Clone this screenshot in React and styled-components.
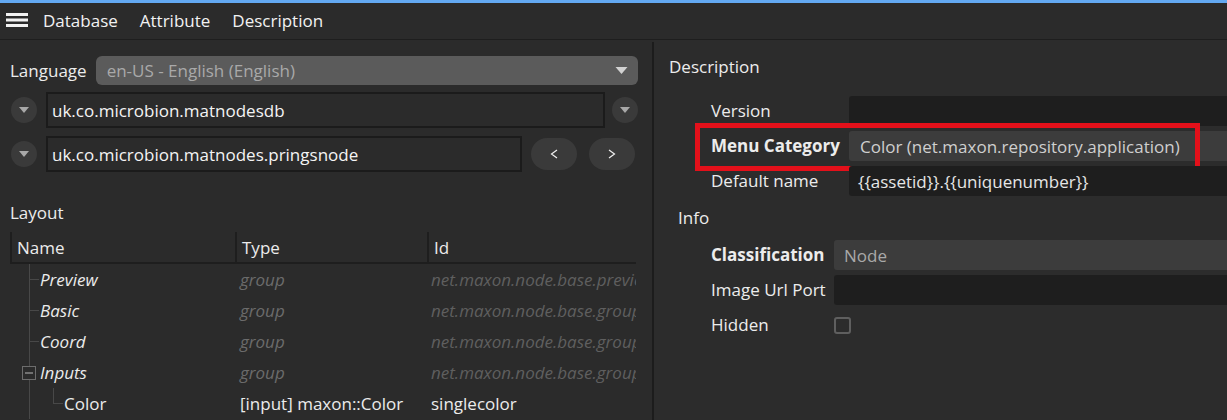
import React from 'react';
import styled, { createGlobalStyle } from 'styled-components';

const FONT = `"Open Sans", "Noto Sans", sans-serif`;

const Global = createGlobalStyle`
  html, body { margin: 0; padding: 0; background: #2b2b2b; }
  body { font-family: ${FONT}; color: #e8e8e8; font-size: 17px; overflow: hidden; }
  * { box-sizing: border-box; }
`;

const Window = styled.div`
  width: 1227px;
  height: 420px;
  display: flex;
  flex-direction: column;
  background: #2b2b2b;
  border-top: 3px solid #63a9f2;
  overflow: hidden;
`;

const MenuBar = styled.div`
  height: 37px;
  flex: none;
  display: flex;
  align-items: center;
  padding-left: 6px;
  border-bottom: 1px solid #1e1e1e;
`;

const Hamburger = styled.svg`
  width: 22px;
  height: 14px;
  margin-right: 4px;
  margin-top: -2px;
`;

const MenuItem = styled.span`
  padding: 0 11px;
  color: #f2f2f2;
  font-size: 17px;
  line-height: 24px;
`;

const Main = styled.div`
  flex: 1;
  display: flex;
  min-height: 0;
`;

const LeftPanel = styled.div`
  width: 652px;
  flex: none;
  padding: 16px 14px 0 10px;
  display: flex;
  flex-direction: column;
  overflow: hidden;
`;

const Splitter = styled.div`
  width: 2px;
  flex: none;
  margin-top: 2px;
  background: #1c1c1c;
`;

const RightPanel = styled.div`
  flex: 1;
  padding: 15px 0 0 15px;
  display: flex;
  flex-direction: column;
  background: #2c2c2c;
  overflow: hidden;
`;

const LangRow = styled.div`
  display: flex;
  align-items: center;
  gap: 9px;
  height: 29px;
`;

const Label = styled.span`
  color: #ececec;
  font-size: 17px;
  line-height: 24px;
  white-space: nowrap;
  font-weight: ${p => (p.$bold ? 700 : 400)};
`;

const Dropdown = styled.div`
  flex: 1;
  height: 29px;
  display: flex;
  align-items: center;
  justify-content: space-between;
  padding: 0 10px 0 11px;
  border-radius: 6px;
  background: #5b5b5b;
  color: #a9a9a9;
`;

const Caret = styled.svg`
  width: ${p => p.$w || 12}px;
  height: ${p => Math.round((p.$w || 12) * 0.55)}px;
  flex: none;
`;

const IdRow = styled.div`
  display: flex;
  align-items: center;
  height: 36px;
  margin-top: ${p => p.$mt}px;
  padding-left: 1px;
`;

const RoundButton = styled.div`
  width: 26px;
  height: 26px;
  flex: none;
  border-radius: 50%;
  background: #3a3a3a;
  display: flex;
  align-items: center;
  justify-content: center;
  margin-left: ${p => p.$ml || 0}px;
`;

const TextField = styled.div`
  height: 36px;
  flex: ${p => (p.$width ? 'none' : '1')};
  width: ${p => (p.$width ? `${p.$width}px` : 'auto')};
  margin-left: 9px;
  border: 2px solid #1b1b1b;
  background: #2b2b2b;
  padding-left: 4px;
  display: flex;
  align-items: center;
  color: #f4f4f4;
  white-space: nowrap;
  overflow: hidden;
`;

const PillButton = styled.div`
  width: 46px;
  height: 32px;
  flex: none;
  border-radius: 16px;
  background: #3a3a3a;
  margin-left: ${p => p.$ml}px;
  display: flex;
  align-items: center;
  justify-content: center;
`;

const Chevron = styled.svg`
  width: 8px;
  height: 10px;
`;

const SectionLabel = styled.div`
  font-size: 17px;
  line-height: 24px;
  color: #ececec;
  margin-top: ${p => p.$mt || 0}px;
  margin-left: ${p => p.$ml || 0}px;
`;

const Table = styled.div`
  margin-top: 7px;
  width: 626px;
  display: flex;
  flex-direction: column;
`;

const Columns = `grid-template-columns: 225px 192px 1fr;`;

const HeaderRow = styled.div`
  display: grid;
  ${Columns}
  height: 32px;
  border-bottom: 2px solid #1e1e1e;
`;

const HeaderCell = styled.div`
  border-left: 2px solid #1e1e1e;
  padding-left: 5px;
  display: flex;
  align-items: center;
  color: #ececec;
`;

const Row = styled.div`
  display: grid;
  ${Columns}
  height: 31px;
`;

const Cell = styled.div`
  display: flex;
  align-items: center;
  padding-left: ${p => p.$pl ?? 7}px;
  white-space: nowrap;
  overflow: hidden;
  font-style: ${p => (p.$italic ? 'italic' : 'normal')};
  color: ${p => p.$color || '#ececec'};
`;

const Guide = styled.svg`
  flex: none;
  height: 31px;
  width: ${p => p.$w}px;
`;

const LINE = '#484848';

function TreeGuide({ kind }) {
  if (kind === 'group') {
    return (
      <Guide $w={30} viewBox="0 0 30 31">
        <line x1="19.5" y1="0" x2="19.5" y2="31" stroke={LINE} />
        <rect x="12.5" y="9.5" width="13" height="13" fill="#2b2b2b" stroke="#6d6d6d" />
        <line x1="15" y1="16" x2="23" y2="16" stroke="#8a8a8a" strokeWidth="1.5" />
      </Guide>
    );
  }
  if (kind === 'child') {
    return (
      <Guide $w={54} viewBox="0 0 54 31">
        <line x1="19.5" y1="0" x2="19.5" y2="31" stroke={LINE} />
        <line x1="43.5" y1="0" x2="43.5" y2="16" stroke={LINE} />
        <line x1="43.5" y1="15.5" x2="53" y2="15.5" stroke={LINE} />
      </Guide>
    );
  }
  return (
    <Guide $w={30} viewBox="0 0 30 31">
      <line x1="19.5" y1="0" x2="19.5" y2="31" stroke={LINE} />
      <line x1="19.5" y1="15.5" x2="29" y2="15.5" stroke={LINE} />
    </Guide>
  );
}

const FieldList = styled.div`
  display: flex;
  flex-direction: column;
  gap: 5px;
  margin-left: ${p => p.$ml}px;
  margin-top: ${p => p.$mt}px;
  --label-col: ${p => p.$labelCol}px;
`;

const FieldRow = styled.div`
  position: relative;
  display: grid;
  grid-template-columns: var(--label-col) 1fr;
  column-gap: 8px;
  align-items: center;
  height: 30px;
`;

const Field = styled.div`
  height: 30px;
  border-radius: 3px 0 0 3px;
  display: flex;
  align-items: center;
  padding-left: ${p => p.$pl || 10}px;
  white-space: nowrap;
  overflow: hidden;
  background: ${p => (p.$variant === 'select' ? '#3c3c3c' : '#1e1e1e')};
  color: ${p => p.$color || '#e6e6e6'};
`;

const Highlight = styled.div`
  position: absolute;
  top: -8px;
  bottom: -10px;
  left: -16px;
  right: 27px;
  border: 5px solid #e3101a;
  pointer-events: none;
`;

const Checkbox = styled.div`
  width: 17px;
  height: 17px;
  border: 2px solid #5f5f5f;
  border-radius: 3px;
`;

const rows = [
  { name: 'Preview', type: 'group', id: 'net.maxon.node.base.preview', kind: 'leaf' },
  { name: 'Basic', type: 'group', id: 'net.maxon.node.base.group', kind: 'leaf' },
  { name: 'Coord', type: 'group', id: 'net.maxon.node.base.group', kind: 'leaf' },
  { name: 'Inputs', type: 'group', id: 'net.maxon.node.base.group', kind: 'group' },
  { name: 'Color', type: '[input] maxon::Color', id: 'singlecolor', kind: 'child' },
];

function DownCaret({ w = 12, color = '#cfcfcf' }) {
  return (
    <Caret $w={w} viewBox="0 0 12 7">
      <path d="M0 0 L12 0 L6 7 Z" fill={color} />
    </Caret>
  );
}

function ChevronIcon({ dir }) {
  const d = dir === 'left' ? 'M7 1 L1.5 5 L7 9' : 'M1 1 L6.5 5 L1 9';
  return (
    <Chevron viewBox="0 0 8 10">
      <path d={d} fill="none" stroke="#f0f0f0" strokeWidth="1.2" />
    </Chevron>
  );
}

export default function App() {
  return (
    <>
      <Global />
      <Window>
        <MenuBar>
          <Hamburger viewBox="0 0 22 14">
            <rect x="0" y="0" width="22" height="3" fill="#f2f2f2" />
            <rect x="0" y="5.5" width="22" height="3" fill="#f2f2f2" />
            <rect x="0" y="11" width="22" height="3" fill="#f2f2f2" />
          </Hamburger>
          <MenuItem>Database</MenuItem>
          <MenuItem>Attribute</MenuItem>
          <MenuItem>Description</MenuItem>
        </MenuBar>
        <Main>
          <LeftPanel>
            <LangRow>
              <Label>Language</Label>
              <Dropdown>
                <span>en-US - English (English)</span>
                <DownCaret w={13} color="#d2d2d2" />
              </Dropdown>
            </LangRow>
            <IdRow $mt={7}>
              <RoundButton>
                <DownCaret w={10} color="#a8a8a8" />
              </RoundButton>
              <TextField>uk.co.microbion.matnodesdb</TextField>
              <RoundButton $ml={7}>
                <DownCaret w={10} color="#a8a8a8" />
              </RoundButton>
            </IdRow>
            <IdRow $mt={8}>
              <RoundButton>
                <DownCaret w={10} color="#a8a8a8" />
              </RoundButton>
              <TextField $width={476}>uk.co.microbion.matnodes.pringsnode</TextField>
              <PillButton $ml={9}>
                <ChevronIcon dir="left" />
              </PillButton>
              <PillButton $ml={12}>
                <ChevronIcon dir="right" />
              </PillButton>
            </IdRow>
            <SectionLabel $mt={29}>Layout</SectionLabel>
            <Table>
              <HeaderRow>
                <HeaderCell>Name</HeaderCell>
                <HeaderCell>Type</HeaderCell>
                <HeaderCell>Id</HeaderCell>
              </HeaderRow>
              {rows.map(r => {
                const isChild = r.kind === 'child';
                return (
                  <Row key={r.name}>
                    <Cell $pl={0} $italic={!isChild}>
                      <TreeGuide kind={r.kind} />
                      {r.name}
                    </Cell>
                    <Cell $pl={5} $italic={!isChild} $color={isChild ? '#ececec' : '#6c6c6c'}>
                      {r.type}
                    </Cell>
                    <Cell $pl={4} $italic={!isChild} $color={isChild ? '#ececec' : '#5f5f5f'}>
                      {r.id}
                    </Cell>
                  </Row>
                );
              })}
            </Table>
          </LeftPanel>
          <Splitter />
          <RightPanel>
            <SectionLabel>Description</SectionLabel>
            <FieldList $ml={42} $mt={17} $labelCol={130}>
              <FieldRow>
                <Label>Version</Label>
                <Field />
              </FieldRow>
              <FieldRow>
                <Label $bold>Menu Category</Label>
                <Field $variant="select" $pl={11} $color="#cfcfcf">
                  Color (net.maxon.repository.application)
                </Field>
                <Highlight />
              </FieldRow>
              <FieldRow>
                <Label>Default name</Label>
                <Field $pl={9}>{'{{assetid}}.{{uniquenumber}}'}</Field>
              </FieldRow>
            </FieldList>
            <SectionLabel $mt={10} $ml={9}>Info</SectionLabel>
            <FieldList $ml={42} $mt={10} $labelCol={115}>
              <FieldRow>
                <Label $bold>Classification</Label>
                <Field $variant="select" $color="#a9a9a9">Node</Field>
              </FieldRow>
              <FieldRow>
                <Label>Image Url Port</Label>
                <Field />
              </FieldRow>
              <FieldRow>
                <Label>Hidden</Label>
                <Checkbox />
              </FieldRow>
            </FieldList>
          </RightPanel>
        </Main>
      </Window>
    </>
  );
}
